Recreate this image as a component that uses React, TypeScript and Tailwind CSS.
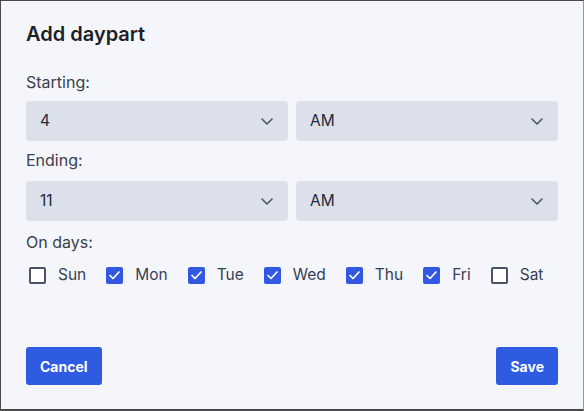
import React from 'react';

const Chevron = () => (
  <svg width="12" height="7" viewBox="0 0 12 7" fill="none" className="shrink-0">
    <polyline points="1,1 6,6 11,1" stroke="#4b5563" strokeWidth="1.6" strokeLinecap="round" strokeLinejoin="round" />
  </svg>
);

const SelectBox = ({ value }: { value: string }) => (
  <div className="flex-1 h-[40px] rounded-[4px] bg-[#dce0ea] flex items-center justify-between pl-[14px] pr-[15px] text-[15.5px] text-[#1f2937]">
    <span>{value}</span>
    <Chevron />
  </div>
);

const Check = ({ label, checked }: { label: string; checked: boolean }) => (
  <label className="flex items-center gap-[12px] text-[15.5px] leading-[20px] text-[#374151]">
    {checked ? (
      <span className="w-[17px] h-[17px] rounded-[2px] bg-[#3257e0] flex items-center justify-center">
        <svg width="11" height="9" viewBox="0 0 11 9" fill="none">
          <polyline points="1,4.5 4,7.5 10,1" stroke="white" strokeWidth="1.7" strokeLinecap="round" strokeLinejoin="round" />
        </svg>
      </span>
    ) : (
      <span className="w-[17px] h-[17px] rounded-[2px] border-2 border-[#4b5263] bg-white" />
    )}
    <span>{label}</span>
  </label>
);

const days: [string, boolean][] = [
  ['Sun', false],
  ['Mon', true],
  ['Tue', true],
  ['Wed', true],
  ['Thu', true],
  ['Fri', true],
  ['Sat', false],
];

export default function App() {
  return (
    <div
      className="w-[584px] h-[411px] bg-[#f4f6fb] border border-[#4a4a4a] border-b-2 border-r-[#9a9a9a] flex flex-col px-[25px] pt-[21px] pb-[24px]"
      style={{ fontFamily: 'Inter, "Noto Sans", sans-serif' }}
    >
      <h2 className="text-[20px] leading-[24px] font-semibold text-[#1c1f26]">Add daypart</h2>

      <div className="mt-[26px] text-[16px] leading-[20px] text-[#3a3f4a]">Starting:</div>
      <div className="mt-[9px] flex gap-[8px]">
        <SelectBox value="4" />
        <SelectBox value="AM" />
      </div>

      <div className="mt-[9px] text-[16px] leading-[20px] text-[#3a3f4a]">Ending:</div>
      <div className="mt-[11px] flex gap-[8px]">
        <SelectBox value="11" />
        <SelectBox value="AM" />
      </div>

      <div className="mt-[11px] text-[16px] leading-[20px] text-[#3a3f4a]">On days:</div>
      <div className="mt-[13px] flex items-center gap-[20px] pl-[3px]">
        {days.map(([d, c]) => (
          <Check key={d} label={d} checked={c} />
        ))}
      </div>

      <div className="mt-auto flex justify-between">
        <button className="h-[38px] px-[14px] rounded-[3px] bg-[#2f5be3] text-white text-[14px] font-bold">Cancel</button>
        <button className="h-[38px] px-[14px] rounded-[3px] bg-[#2f5be3] text-white text-[14px] font-bold">Save</button>
      </div>
    </div>
  );
}
